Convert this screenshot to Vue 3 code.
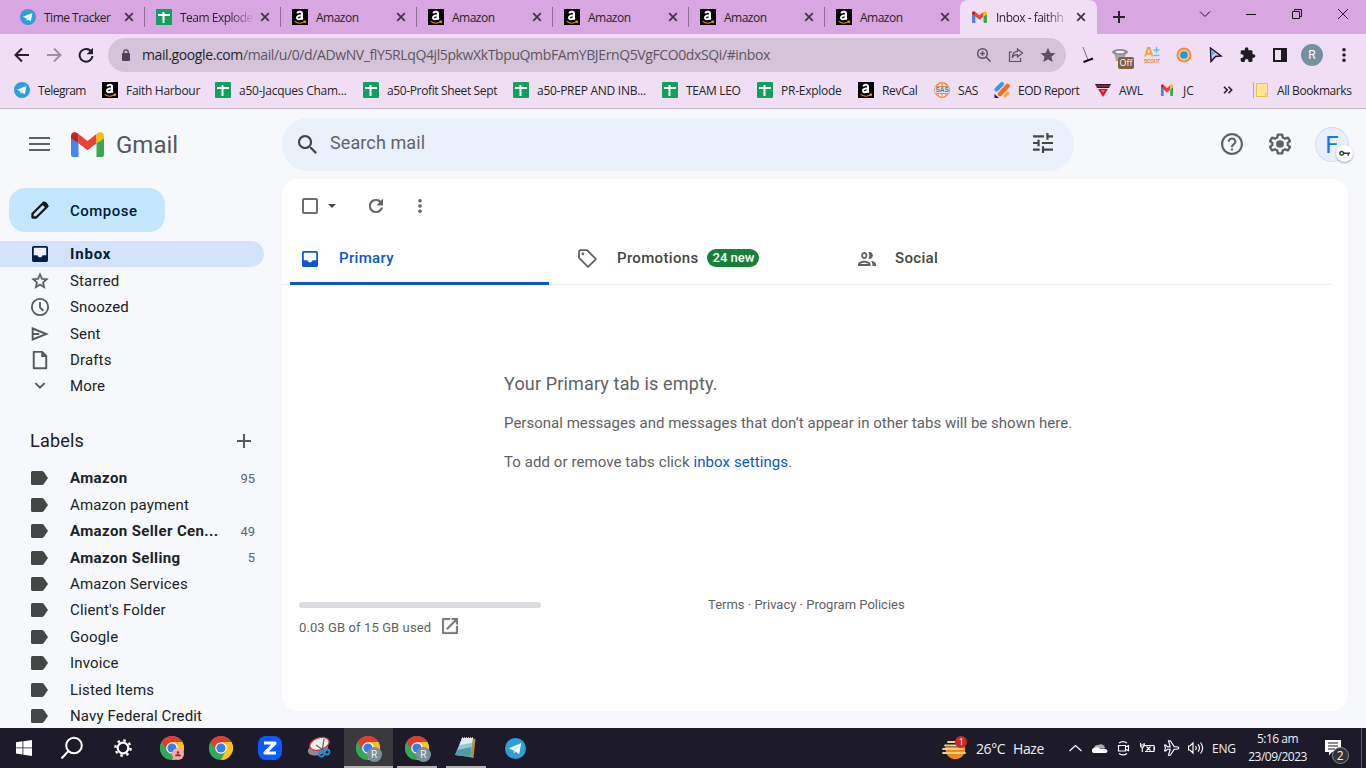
<template>
  <div class="screen">
    <svg class="sprite" aria-hidden="true">
      <symbol id="telegram" viewBox="0 0 16 16">
        <circle cx="8" cy="8" r="8" fill="#2ba0da" />
        <path d="M3 7.8l9.4-3.900-1.600 8.400-2.600-1.900-1.400 1.300-.2-2.200z" fill="#fff" />
        <path d="M6.600 9.400l4.200-3.700-3.200 4.300-.8 1.600z" fill="#b5d6ea" />
      </symbol>
      <symbol id="sheet" viewBox="0 0 16 16">
        <rect width="16" height="16" rx="1" fill="#12a05c" />
        <path d="M2 6h12M7.500 3v11" stroke="#fff" stroke-width="2" />
      </symbol>
      <symbol id="gmail" viewBox="0 0 33 25" preserveAspectRatio="none">
        <path d="M0 6l7.500 5v14H2.300A2.300 2.300 0 0 1 0 22.700z" fill="#4285f4" />
        <path d="M33 6l-7.500 5v14h5.200a2.300 2.300 0 0 0 2.300-2.300z" fill="#34a853" />
        <path d="M7.500 2l9 6.900 9-6.900v9.200l-9 7-9-7z" fill="#ea4335" />
        <path d="M0 4C0 .4 4-1.200 7.500 2v9.200L0 6.500z" fill="#c5221f" />
        <path d="M33 4c0-3.600-4-5.200-7.500-2v9.200L33 6.500z" fill="#fbbc04" />
      </symbol>
      <symbol id="eod" viewBox="0 0 16 16">
        <path d="M2.500 7.500L8 2" stroke="#2f9bf5" stroke-width="4" stroke-linecap="round" />
        <path d="M6 12l7.500-8" stroke="#ff6a13" stroke-width="4.500" stroke-linecap="round" />
        <path d="M11 14l3-3" stroke="#ffa838" stroke-width="3" stroke-linecap="round" />
        <path d="M.5 12v4h4.500z" fill="#152063" />
      </symbol>
      <symbol id="awl" viewBox="0 0 16 16">
        <path d="M0 2h16l-2 4H2z" fill="#3b1020" />
        <path d="M1 4h14" stroke="#c4485c" />
        <path d="M3 7h10l-5 8z" fill="#e5102b" />
        <path d="M6 8h4l-2 3z" fill="#fff" opacity=".35" />
      </symbol>
      <symbol id="folder" viewBox="0 0 16 16">
        <path d="M2.500 1.500h11v13h-11z" fill="#ffe596" stroke="#e8c44e" />
        <path d="M11.500 14.500v-3h2" fill="none" stroke="#e8c44e" />
      </symbol>
      <symbol id="close" viewBox="0 0 10 10">
        <path d="M1.200 1.200l7.600 7.600M8.800 1.200L1.200 8.800" stroke="#3c3240" stroke-width="1.700" />
      </symbol>
      <symbol id="inbox" viewBox="3 3 18 18">
        <path d="M5 5h14v9H5z" fill="#fff" opacity=".6" />
        <path d="M19 3H5c-1.100 0-2 .9-2 2v14c0 1.100.9 2 2 2h14c1.100 0 2-.9 2-2V5c0-1.100-.9-2-2-2zm0 10.500h-4.300c0 1.500-1.200 2.500-2.700 2.500s-2.700-1-2.700-2.500H5V5h14v8.500z" fill="currentColor" />
      </symbol>
      <symbol id="star" viewBox="0 0 24 24">
        <path d="M22 9.240l-7.190-.62L12 2 9.190 8.630 2 9.240l5.460 4.730L5.820 21 12 17.270 18.180 21l-1.630-7.030L22 9.240zM12 15.400l-3.760 2.270 1-4.280-3.320-2.880 4.380-.38L12 6.100l1.710 4.040 4.380.38-3.320 2.880 1 4.280L12 15.400z" fill="currentColor" stroke="currentColor" stroke-width=".5" />
      </symbol>
      <symbol id="clock" viewBox="0 0 24 24">
        <circle cx="12" cy="12" r="9.800" fill="none" stroke="currentColor" stroke-width="2.200" />
        <path d="M12 6v6.500l4 4" fill="none" stroke="currentColor" stroke-width="2.200" />
      </symbol>
      <symbol id="send" viewBox="0 0 24 24">
        <path d="M3.200 5.400L19.500 12 3.200 18.600zM3 12h8" fill="none" stroke="currentColor" stroke-width="2.300" />
      </symbol>
      <symbol id="draft" viewBox="0 0 24 24">
        <path d="M4.500 2.200h10l5 5v14.600h-15z" fill="none" stroke="currentColor" stroke-width="2.300" stroke-linejoin="round" />
        <path d="M13.500 2v6.500H20z" fill="currentColor" />
      </symbol>
      <symbol id="chevron" viewBox="0 0 24 24">
        <path d="M6.500 8.500l5.500 5.500 5.500-5.500" fill="none" stroke="currentColor" stroke-width="2.300" />
      </symbol>
      <symbol id="label" viewBox="0 0 17 14" preserveAspectRatio="none">
        <path d="M1.500 0H11q1 0 1.600.8L17 7l-4.400 6.200q-.6.8-1.600.8H1.500Q0 14 0 12.500v-11Q0 0 1.500 0z" fill="currentColor" />
      </symbol>
      <symbol id="search" viewBox="3 3 17.500 17.500" preserveAspectRatio="none">
        <path d="M15.500 14h-.79l-.28-.27C15.410 12.590 16 11.110 16 9.500 16 5.910 13.090 3 9.500 3S3 5.910 3 9.500 5.910 16 9.500 16c1.610 0 3.090-.59 4.230-1.570l.27.28v.79l5 4.990L20.490 19l-4.990-5zm-6 0C7.010 14 5 11.990 5 9.500S7.010 5 9.500 5 14 7.010 14 9.500 11.990 14 9.500 14z" fill="currentColor" />
      </symbol>
      <symbol id="tune" viewBox="3 3 18 18" preserveAspectRatio="none">
        <path d="M3 17v2h6v-2H3zM3 5v2h10V5H3zm10 16v-2h8v-2h-8v-2h-2v6h2zM7 9v2H3v2h4v2h2V9H7zm14 4v-2H11v2h10zm-6-4h2V7h4V5h-4V3h-2v6z" fill="currentColor" />
      </symbol>
      <symbol id="help" viewBox="2 2 20 20" preserveAspectRatio="none">
        <path d="M11 18h2v-2h-2v2zm1-16C6.480 2 2 6.480 2 12s4.480 10 10 10 10-4.480 10-10S17.520 2 12 2zm0 18c-4.410 0-8-3.590-8-8s3.590-8 8-8 8 3.590 8 8-3.590 8-8 8zm0-14c-2.210 0-4 1.790-4 4h2c0-1.100.9-2 2-2s2 .9 2 2c0 2-3 1.750-3 5h2c0-2.250 3-2.500 3-5 0-2.210-1.790-4-4-4z" fill="currentColor" />
      </symbol>
      <symbol id="gear" viewBox="2 1.500 20 21" preserveAspectRatio="none">
        <path d="M10 3h4l.5 2.800 2 1.100 2.700-1 1.900 3.400-2.100 1.700v2l2.100 1.700-1.900 3.400-2.700-1-2 1.100L14 21h-4l-.5-2.800-2-1.100-2.700 1-1.900-3.400L5 13v-2L2.900 9.300l1.900-3.400 2.700 1 2-1.100z" fill="none" stroke="currentColor" stroke-width="2.200" stroke-linejoin="round" />
        <circle cx="12" cy="12" r="3.600" fill="currentColor" />
      </symbol>
      <symbol id="refresh" viewBox="4 4 16 16">
        <path d="M17.650 6.350C16.200 4.900 14.210 4 12 4c-4.420 0-7.990 3.580-7.990 8s3.570 8 7.990 8c3.730 0 6.840-2.550 7.730-6h-2.080c-.82 2.330-3.040 4-5.650 4-3.310 0-6-2.690-6-6s2.690-6 6-6c1.660 0 3.140.69 4.220 1.780L13 11h7V4l-2.350 2.350z" fill="currentColor" stroke="currentColor" stroke-width=".5" />
      </symbol>
      <symbol id="dots" viewBox="0 0 4 14">
        <circle cx="2" cy="1.800" r="1.800" fill="currentColor" />
        <circle cx="2" cy="7" r="1.800" fill="currentColor" />
        <circle cx="2" cy="12.200" r="1.800" fill="currentColor" />
      </symbol>
      <symbol id="tag" viewBox="0 0 18 18">
        <path d="M1 2v6.500L9.500 17l7.500-7.500L8.500 1H2z" fill="none" stroke="currentColor" stroke-width="1.700" stroke-linejoin="round" />
        <circle cx="4.600" cy="4.600" r="1.300" fill="currentColor" />
      </symbol>
      <symbol id="people" viewBox="2 5 20 14" preserveAspectRatio="none">
        <path d="M9 13.750c-2.340 0-7 1.170-7 3.500V19h14v-1.750c0-2.330-4.660-3.500-7-3.500zM4.340 17c.84-.58 2.870-1.250 4.660-1.250s3.820.67 4.660 1.250H4.340zM9 12c1.930 0 3.500-1.570 3.500-3.500S10.930 5 9 5 5.500 6.570 5.500 8.500 7.070 12 9 12zm0-5c.83 0 1.500.67 1.500 1.500S9.830 10 9 10s-1.500-.67-1.500-1.500S8.170 7 9 7zm7.040 6.810c1.160.84 1.960 1.960 1.960 3.440V19h4v-1.750c0-2.020-3.500-3.170-5.960-3.440zM15 12c1.930 0 3.500-1.570 3.500-3.500S16.930 5 15 5c-.54 0-1.040.13-1.500.35.63.89 1 1.980 1 3.150s-.37 2.260-1 3.150c.46.22.96.35 1.500.35z" fill="currentColor" />
      </symbol>
      <symbol id="launch" viewBox="3 3 18 18">
        <path d="M19 19H5V5h7V3H5c-1.110 0-2 .9-2 2v14c0 1.100.89 2 2 2h14c1.100 0 2-.9 2-2v-7h-2v7zM14 3v2h3.590l-9.830 9.830 1.410 1.410L19 6.410V10h2V3h-7z" fill="currentColor" stroke="currentColor" stroke-width=".5" />
      </symbol>
      <symbol id="puzzle" viewBox="1 1 23 22">
        <path d="M20.500 11H19V7c0-1.100-.9-2-2-2h-4V3.500C13 2.120 11.880 1 10.500 1S8 2.120 8 3.500V5H4c-1.100 0-1.990.9-1.990 2v3.800H3.500c1.490 0 2.700 1.210 2.700 2.700s-1.210 2.700-2.700 2.700H2V20c0 1.100.9 2 2 2h3.800v-1.500c0-1.490 1.210-2.700 2.700-2.700 1.490 0 2.700 1.210 2.700 2.700V22H17c1.100 0 2-.9 2-2v-4h1.500c1.380 0 2.500-1.120 2.500-2.500S21.880 11 20.500 11z" fill="#1f1b22" />
      </symbol>
      <symbol id="chrome" viewBox="0 0 24 24">
        <circle cx="12" cy="12" r="12" fill="#34a853" />
        <path d="M1.600 6A12 12 0 0 1 22.400 6L12 8z" fill="#e33b2e" />
        <path d="M22.400 6A12 12 0 0 1 12 24l4.800-9.500L12 6z" fill="#fcc31e" />
        <path d="M1.600 6L7.500 15 12 6z" fill="#e33b2e" />
        <path d="M1.600 6L7.200 14.800 11 17l-3 6.300A12 12 0 0 1 1.600 6z" fill="#34a853" />
        <circle cx="12" cy="12" r="5.800" fill="#fff" />
        <circle cx="12" cy="12" r="4.600" fill="#3b7ded" />
      </symbol>
      <symbol id="amazon" viewBox="0 0 16 16">
        <rect width="16" height="16" fill="#000" />
        <path d="M5.200 4.300C6 2.300 10 2.200 10 4.600v4.200q0 1 .9 1.700M10 6.200C6.500 6.200 5 7 5 8.800s3.700 2.400 5-.8" fill="none" stroke="#fff" stroke-width="2" />
        <path d="M2.500 12.400c3.400 2.300 7.200 2.200 10.600.4M11.300 12.300l2.300-.1-.6 2" stroke="#f19a2e" fill="none" stroke-width="1.100" />
      </symbol>
      <symbol id="sas" viewBox="0 0 16 16">
        <circle cx="8" cy="8" r="7.300" fill="#fff3e6" stroke="#f08a3c" stroke-width="1.200" />
        <path d="M8 1v14M2 4.500h12M2 11.500h12M5 1.500c-2 4-2 9 0 13M11 1.500c2 4 2 9 0 13" stroke="#f08a3c" fill="none" />
        <rect x="1" y="5" width="14" height="6" fill="#f0dff4" />
      </symbol>
    </svg>

    <header class="browser">
      <div class="tabstrip">
        <div v-for="(tab, i) in tabs" :key="i" :class="['tab', { active: tab.active }]">
          <svg class="fav"><use :href="'#' + tab.icon" /></svg>
          <span :class="['tab-title', { fade: tab.fade }]">{{ tab.title }}</span>
          <svg class="tab-close"><use href="#close" /></svg>
        </div>
        <svg class="new-tab" viewBox="0 0 12 12"><path d="M6 0v12M0 6h12" stroke="#2a222e" stroke-width="2" /></svg>
        <div class="win-buttons">
          <svg viewBox="0 0 12 12"><path d="M1 3.500l5 5 5-5" /></svg>
          <svg viewBox="0 0 12 12"><path d="M1 6.500h10" /></svg>
          <svg viewBox="0 0 12 12"><path d="M1.500 3.500h7v7h-7zM3.500 3.500v-2h7v7h-2" /></svg>
          <svg viewBox="0 0 12 12"><path d="M1 1l10 10M11 1L1 11" /></svg>
        </div>
      </div>

      <div class="toolbar">
        <svg class="nav" viewBox="0 0 16 16"><path d="M15 8H2M8 1.500L1.500 8 8 14.500" /></svg>
        <svg class="nav off" viewBox="0 0 16 16"><path d="M1 8h13M8 1.500L14.500 8 8 14.500" /></svg>
        <svg class="nav" viewBox="0 0 16 16"><path d="M13.500 5A6.400 6.400 0 1 0 14.400 9" /><path class="solid" d="M15 .8v6.400H8.600z" /></svg>
        <div class="omnibox">
          <svg class="lock" viewBox="0 0 10 12"><rect x="1" y="4" width="8" height="8" rx="1" fill="#4c4450" /><path d="M2.800 5V3a2.200 2.200 0 0 1 4.400 0v2" fill="none" stroke="#4c4450" stroke-width="1.300" /></svg>
          <span class="url"><b>mail.google.com</b>/mail/u/0/d/ADwNV_flY5RLqQ4jl5pkwXkTbpuQmbFAmYBJErnQ5VgFCO0dxSQi/#inbox</span>
          <svg class="omni-icon" viewBox="0 0 16 16"><circle cx="6.500" cy="6.500" r="4.800" /><path d="M10 10l4.500 4.500M4.300 6.500h4.400M6.500 4.300v4.400" /></svg>
          <svg class="omni-icon" viewBox="0 0 16 16"><path d="M4 5H1.500v9.500h11V11M9.500 2l5 4-5 4V7.600C7 7.600 5 8.500 4.200 11 4.300 7 6 4.700 9.500 4.400z" stroke-width="1.200" /></svg>
          <svg class="omni-icon" viewBox="0 0 16 16"><path class="fill" d="M8 .8l2.100 5 5.400.4-4.100 3.500 1.300 5.300L8 12.200 3.300 15l1.300-5.300L.5 6.200l5.400-.4z" /></svg>
        </div>
        <div class="extensions">
          <svg viewBox="0 0 16 16"><path d="M3 0l5 13" stroke="#716a76" stroke-width="1" /><path d="M3.500 15L13 11.500" stroke="#111" stroke-width="2" /></svg>
          <span class="ext-badged">
            <svg viewBox="0 0 16 16"><path d="M2 6h12l-2 8H4z" fill="#a8a8a8" /><ellipse cx="8" cy="5" rx="8" ry="3" fill="#8d8d8d" /><ellipse cx="8" cy="5" rx="4.500" ry="1.300" fill="#eee" /></svg>
            <i>Off</i>
          </span>
          <svg viewBox="0 0 16 16">
            <path d="M1 9.500L4 1h1.500l3 8.500M2.500 6.800h5" stroke="#f7a63b" stroke-width="2" fill="none" />
            <path d="M12.500 0v6M9.500 3h6M9.500 8.500h6" stroke="#5cc1e8" stroke-width="1.400" />
            <text x="0" y="15.500" font-family="Liberation Sans, sans-serif" font-size="5" font-weight="700" fill="#f58220" textLength="16">SCOUT</text>
          </svg>
          <svg viewBox="0 0 16 16"><circle cx="8" cy="8" r="7.500" fill="#f5893a" /><circle cx="8" cy="8" r="5.600" fill="#ffc48c" /><circle cx="8" cy="8" r="3.800" fill="#1e9be0" /></svg>
          <svg viewBox="0 0 16 16"><path d="M2.500 1l10.500 8-5.500.5L3 14.500z" fill="#d8c8f2" stroke="#191535" stroke-width="1.500" /><path d="M3.300 3v6l4-2.800z" fill="#53b6ea" /></svg>
          <svg><use href="#puzzle" /></svg>
          <svg viewBox="0 0 16 16"><path d="M2 2h12v12H2z" fill="none" stroke="#1f1b22" stroke-width="2" /><path d="M9 2h5v12H9z" fill="#1f1b22" /></svg>
        </div>
        <span class="profile">R</span>
        <svg class="menu-dots"><use href="#dots" /></svg>
      </div>

      <div class="bookmarks">
        <div v-for="mark in bookmarks" :key="mark.title" class="bookmark" :style="{ width: mark.width + 'px' }">
          <svg :class="['fav', mark.icon]" viewBox="0 0 16 16">
            <use :href="'#' + mark.icon" width="16" height="16" />
            <text v-if="mark.icon === 'sas'" x="1.500" y="10.300" font-family="Liberation Sans, sans-serif" font-weight="700" font-size="6.500" fill="#1c86c8">SAS</text>
          </svg>
          <span :style="{ letterSpacing: mark.spacing + 'px' }">{{ mark.title }}</span>
        </div>
        <svg class="overflow" viewBox="0 0 10 8"><path d="M1 .8L4.200 4 1 7.200M5.500.8L8.700 4 5.500 7.200" fill="none" stroke="#241f28" stroke-width="1.600" /></svg>
        <div class="all-marks">
          <svg class="fav"><use href="#folder" /></svg>
          <span>All Bookmarks</span>
        </div>
      </div>
    </header>

    <div class="mail">
      <aside class="side">
        <div class="brand">
          <svg class="burger" viewBox="0 0 21 14"><path d="M0 1h21M0 7h21M0 13h21" stroke="#5f6368" stroke-width="2" /></svg>
          <svg class="logo"><use href="#gmail" /></svg>
          <span>Gmail</span>
        </div>
        <button class="compose">
          <svg viewBox="0 0 18 18"><path d="M1.500 16.500v-3.700L12.800 1.500l3.700 3.700L5.200 16.500z" fill="none" stroke="#15191c" stroke-width="2.300" stroke-linejoin="round" /><path d="M11 3.500l2.300-2.300a1.200 1.200 0 0 1 1.600 0l2 2a1.200 1.200 0 0 1 0 1.600L14.500 7z" fill="#15191c" /></svg>
          <span>Compose</span>
        </button>
        <nav class="folders">
          <div v-for="(folder, i) in folders" :key="folder.name" :class="['row', { selected: i === 0 }]">
            <svg :class="['row-icon', folder.icon]"><use :href="'#' + folder.icon" /></svg>
            <span class="row-name">{{ folder.name }}</span>
          </div>
        </nav>
        <div class="labels-head">
          <span>Labels</span>
          <svg viewBox="0 0 14 14"><path d="M7 0v14M0 7h14" stroke="#55585c" stroke-width="2" /></svg>
        </div>
        <nav class="labels">
          <div v-for="label in labels" :key="label.name" :class="['row', { unread: label.count }]">
            <svg class="row-icon label"><use href="#label" /></svg>
            <span class="row-name">{{ label.name }}</span>
            <span v-if="label.count" class="count">{{ label.count }}</span>
          </div>
        </nav>
      </aside>

      <main class="content">
        <div class="topbar">
          <div class="search">
            <svg class="search-icon"><use href="#search" /></svg>
            <span>Search mail</span>
            <svg class="tune-icon"><use href="#tune" /></svg>
          </div>
          <svg class="top-icon"><use href="#help" /></svg>
          <svg class="top-icon gear"><use href="#gear" /></svg>
          <div class="avatar">
            <span>F</span>
            <i><svg viewBox="0 0 10 6"><circle cx="2.500" cy="3" r="1.700" fill="none" stroke="#333" stroke-width="1.300" /><path d="M4.200 3H10M8.300 3v2.200" stroke="#333" stroke-width="1.300" /></svg></i>
          </div>
        </div>

        <section class="card">
          <div class="actions">
            <span class="checkbox"></span>
            <span class="caret"></span>
            <svg class="reload"><use href="#refresh" /></svg>
            <svg class="more"><use href="#dots" /></svg>
          </div>
          <div class="categories">
            <div class="category current"><svg class="cat-inbox"><use href="#inbox" /></svg><span>Primary</span></div>
            <div class="category"><svg class="cat-tag"><use href="#tag" /></svg><span>Promotions</span><em>24 new</em></div>
            <div class="category"><svg class="cat-people"><use href="#people" /></svg><span>Social</span></div>
          </div>
          <div class="empty">
            <h2>Your Primary tab is empty.</h2>
            <p>Personal messages and messages that don’t appear in other tabs will be shown here.</p>
            <p>To add or remove tabs click <a>inbox settings</a>.</p>
          </div>
          <footer class="foot">
            <div class="storage">
              <div class="meter"></div>
              <div class="used"><span>0.03 GB of 15 GB used</span><svg><use href="#launch" /></svg></div>
            </div>
            <div class="policies">Terms · Privacy · Program Policies</div>
          </footer>
        </section>
      </main>
    </div>

    <footer class="taskbar">
      <div class="task"><svg class="w15" viewBox="0 0 16 16"><path d="M0 2.200l6.500-.9v6.200H0zM7.300 1.200L16 0v7.500H7.300zM0 8.300h6.500v6.200L0 13.600zM7.300 8.300H16V16l-8.700-1.200z" fill="#fff" /></svg></div>
      <div class="task"><svg viewBox="0 0 24 24"><circle cx="14" cy="9.500" r="7.800" fill="none" stroke="#fff" stroke-width="2" /><path d="M8.500 15L1.500 22.500" stroke="#fff" stroke-width="2" /></svg></div>
      <div class="task"><svg class="w18" viewBox="0 0 18 18"><circle cx="9" cy="9" r="5.300" fill="none" stroke="#fff" stroke-width="2.200" /><circle cx="9" cy="9" r="7.600" fill="none" stroke="#fff" stroke-width="2.400" stroke-dasharray="2.600 3.370" /></svg></div>
      <div class="task"><svg><use href="#chrome" /></svg><i class="person"><svg viewBox="0 0 8 8"><circle cx="4" cy="2" r="1.700" fill="#a52a24" /><path d="M0 7q0-3 4-3t4 3z" fill="#a52a24" /></svg></i></div>
      <div class="task"><svg><use href="#chrome" /></svg></div>
      <div class="task"><svg viewBox="0 0 24 24"><rect width="24" height="24" rx="8" fill="#0b5cff" /><path d="M6 7h11L7 17h11" fill="none" stroke="#fff" stroke-width="3.200" stroke-linejoin="round" /></svg></div>
      <div class="task"><svg viewBox="0 0 24 24"><ellipse cx="11" cy="13" rx="10.500" ry="6" fill="#8c8a90" transform="rotate(-18 11 13)" /><ellipse cx="12.500" cy="8" rx="10" ry="6" fill="#f3f0f0" stroke="#d3313b" stroke-width="1.300" transform="rotate(-18 12 8)" /><path d="M9 9l10 7M17 3l-2 13" stroke="#5d6168" stroke-width="1.300" /><circle cx="14.500" cy="18" r="2.500" fill="none" stroke="#1c8fd6" stroke-width="1.800" /><circle cx="20" cy="16" r="2.500" fill="none" stroke="#1c8fd6" stroke-width="1.800" /></svg></div>
      <div class="task current"><svg><use href="#chrome" /></svg><i>R</i></div>
      <div class="task open"><svg><use href="#chrome" /></svg><i>R</i></div>
      <div class="task open"><svg viewBox="0 0 24 24"><path d="M17 2l4.500 1-2 19-5-1z" fill="#b88a43" /><path d="M8 2h11l-2.500 19L1 19z" fill="#91c9cf" /><path d="M8 2h11l-1 5-12.500 2z" fill="#d6eff0" /><path d="M3.500 14L17.500 11l-1 10L1 19z" fill="#4f9aa6" /><path d="M8 2h11" stroke="#e8e8e8" stroke-width="1.500" stroke-dasharray="1 1" /></svg></div>
      <div class="task"><svg class="w20"><use href="#telegram" /></svg></div>

      <div class="weather">
        <svg viewBox="0 0 26 26">
          <path d="M3 12h20a10 10 0 0 1-19 6z" fill="#f08a1d" />
          <path d="M6 7h7M3 10.500h12M1 14h20M1 18h22" stroke="#f8cf7b" stroke-width="1.800" stroke-linecap="round" />
          <circle cx="19" cy="7" r="6" fill="#c92a21" />
          <text x="19" y="10.200" text-anchor="middle" font-family="Open Sans, sans-serif" font-size="9" fill="#fff">1</text>
        </svg>
        <span>26°C</span><span>Haze</span>
      </div>
      <div class="tray">
        <svg viewBox="0 0 16 16"><path d="M1.500 11L7.500 5.500l6 5.500" /></svg>
        <svg viewBox="0 0 16 16"><path d="M2 9a3.500 3.500 0 0 1 4-4 4.500 4.500 0 0 1 7 3z" fill="#aaa9b0" stroke="none" /><path d="M1.500 13a2.600 2.600 0 0 1 .5-5c2-1.200 5-.8 6.500 1C12 7.600 15 9 15.500 11a2 2 0 0 1-2 2z" fill="#fff" stroke="none" /></svg>
        <svg viewBox="0 0 16 16"><path d="M2.500 5.500h7v5.500h-7zM9.500 7l3-1.300v5l-3-1.300M3 3Q7 .2 11 3M3 13.500q4 2.800 8 0" /></svg>
        <svg viewBox="0 0 16 16"><path d="M5.500 5.500H15v6H6M15.500 7v3M1.500 3v2.500a1.800 1.800 0 0 0 3.600 0V3M3.300 7.500V12M7.500 6.500l4 4M11.500 6.500l-4 4M.5 5h5.500" transform="translate(-1 0)" /></svg>
        <svg viewBox="0 0 16 16"><path d="M14.800 8c0-1-1.500-1.300-4.500-1.200L6.300.8H4.500l1.700 6H3.500L1.800 5H.5l1 3-1 3h1.300L3.500 9.200h2.700l-1.700 6h1.800l4-6c3 .1 4.500-.2 4.500-1.200z" /></svg>
        <svg viewBox="0 0 16 16"><path d="M.5 6h1.500L5 3v10l-3-3H.5zM7.500 6q1.500 2 0 4M10 4.300q3 3.700 0 7.400M12.500 2.500q4.300 5.500 0 11" /></svg>
        <span>ENG</span>
      </div>
      <div class="datetime"><span>5:16 am</span><span>23/09/2023</span></div>
      <div class="notify">
        <svg viewBox="0 0 16 16"><path d="M0 0h16v12H7l-3 3.500V12H0z" fill="#fff" /><path d="M3 3h10M3 6h10M3 9h7" stroke="#1d1b29" stroke-width="1.200" /></svg>
        <i>2</i>
      </div>
      <span class="peek"></span>
    </footer>
  </div>
</template>

<script setup>
import { ref } from "vue";

const tabs = ref([
  { title: "Time Tracker", icon: "telegram" },
  { title: "Team Explode", icon: "sheet", fade: true },
  { title: "Amazon", icon: "amazon" },
  { title: "Amazon", icon: "amazon" },
  { title: "Amazon", icon: "amazon" },
  { title: "Amazon", icon: "amazon" },
  { title: "Amazon", icon: "amazon" },
  { title: "Inbox - faithh", icon: "gmail", fade: true, active: true },
]);

const bookmarks = ref([
  { title: "Telegram", icon: "telegram", width: 88, spacing: -0.55 },
  { title: "Faith Harbour", icon: "amazon", width: 113, spacing: -0.3 },
  { title: "a50-Jacques Cham...", icon: "sheet", width: 148, spacing: -0.25 },
  { title: "a50-Profit Sheet Sept", icon: "sheet", width: 150, spacing: -0.37 },
  { title: "a50-PREP AND INB...", icon: "sheet", width: 149, spacing: -0.27 },
  { title: "TEAM LEO", icon: "sheet", width: 95, spacing: -0.3 },
  { title: "PR-Explode", icon: "sheet", width: 101, spacing: -0.25 },
  { title: "RevCal", icon: "amazon", width: 76, spacing: -0.3 },
  { title: "SAS", icon: "sas", width: 60, spacing: -0.2 },
  { title: "EOD Report", icon: "eod", width: 101, spacing: -0.45 },
  { title: "AWL", icon: "awl", width: 64, spacing: -0.5 },
  { title: "JC", icon: "gmail", width: 60, spacing: 0 },
]);

const folders = ref([
  { name: "Inbox", icon: "inbox" },
  { name: "Starred", icon: "star" },
  { name: "Snoozed", icon: "clock" },
  { name: "Sent", icon: "send" },
  { name: "Drafts", icon: "draft" },
  { name: "More", icon: "chevron" },
]);

const labels = ref([
  { name: "Amazon", count: 95 },
  { name: "Amazon payment" },
  { name: "Amazon Seller Cen...", count: 49 },
  { name: "Amazon Selling", count: 5 },
  { name: "Amazon Services" },
  { name: "Client's Folder" },
  { name: "Google" },
  { name: "Invoice" },
  { name: "Listed Items" },
  { name: "Navy Federal Credit" },
]);
</script>

<style>
body {
  margin: 0;
  overflow: hidden;
}
</style>

<style scoped>
.screen {
  width: 1366px;
  height: 768px;
  display: flex;
  flex-direction: column;
  overflow: hidden;
  font-family: Roboto, "Liberation Sans", sans-serif;
  background: #f6f8fc;
}

.screen * {
  box-sizing: border-box;
}

svg {
  display: block;
  flex: none;
}

i,
em {
  font-style: normal;
}

.sprite {
  display: none;
}

/* browser chrome */
.browser {
  height: 109px;
  flex: none;
  background: #f0dff4;
  border-bottom: 1px solid #c4b3c9;
  font-family: "Open Sans", sans-serif;
  font-size: 12px;
  color: #241f28;
}

.fav {
  width: 16px;
  height: 16px;
}

.tabstrip {
  height: 34px;
  display: flex;
  background: #d8a7e1;
  padding-left: 8px;
}

.tab {
  width: 136px;
  height: 34px;
  display: flex;
  align-items: center;
  padding: 0 10px 0 12px;
  position: relative;
}

.tab:not(:nth-last-of-type(-n+3))::after {
  content: "";
  position: absolute;
  right: -1px;
  top: 7px;
  width: 1px;
  height: 20px;
  background: #8e6b96;
}

.tab.active {
  width: 137px;
  background: #f0dff4;
  border-radius: 8px 8px 0 0;
  padding-right: 11px;
}

.tab.active .fav {
  height: 12px;
  width: 15px;
  margin-right: 1px;
}

.tab-title {
  margin-left: 8px;
  width: 73px;
  white-space: nowrap;
  letter-spacing: -0.5px;
}

.tab-title.fade {
  mask-image: linear-gradient(to right, #000 68%, transparent 102%);
}

.tab-close {
  width: 10px;
  height: 10px;
  margin-left: auto;
}

.new-tab {
  width: 12px;
  height: 12px;
  margin: 11px 0 0 16px;
}

.win-buttons {
  display: flex;
  gap: 34px;
  margin: 8px 0 0 74px;
}

.win-buttons svg {
  width: 12px;
  height: 12px;
  fill: none;
  stroke: #17131a;
}

.toolbar {
  height: 41px;
  display: flex;
  align-items: center;
  padding-left: 14px;
}

.nav {
  width: 16px;
  height: 16px;
  margin-right: 16px;
  fill: none;
  stroke: #241f28;
  stroke-width: 2;
}

.nav.off {
  stroke: #9c8fa1;
}

.nav .solid {
  fill: #241f28;
  stroke: none;
}

.omnibox {
  width: 958px;
  height: 34px;
  margin-left: -2px;
  border-radius: 17px;
  background: #d3c4d7;
  display: flex;
  align-items: center;
  padding-left: 13px;
  color: #5d5562;
}

.lock {
  width: 10px;
  height: 12px;
}

.url {
  margin-left: 11px;
  width: 834px;
  flex: none;
  font-size: 14px;
  white-space: nowrap;
  letter-spacing: -0.385px;
}

.url b {
  font-weight: 400;
  color: #241f28;
}

.omni-icon {
  width: 16px;
  height: 16px;
  margin-right: 16px;
  fill: none;
  stroke: #5a5260;
  stroke-width: 1.5;
}

.omni-icon .fill {
  fill: #5a5260;
  stroke: none;
}

.extensions {
  display: flex;
  gap: 16px;
  margin-left: 14px;
}

.extensions svg {
  width: 16px;
  height: 16px;
}

.ext-badged {
  position: relative;
}

.ext-badged i {
  position: absolute;
  left: 6px;
  top: 10px;
  width: 16px;
  height: 12px;
  border-radius: 2px;
  background: #80603f;
  color: #fff;
  font-size: 9px;
  line-height: 12px;
  text-align: center;
}

.profile {
  width: 22px;
  height: 22px;
  margin-left: 13px;
  border-radius: 50%;
  background: #78909c;
  color: #fff;
  font: 12px/22px Roboto, sans-serif;
  text-align: center;
}

.menu-dots {
  width: 4px;
  height: 14px;
  margin-left: 19px;
}

.bookmarks {
  height: 30px;
  display: flex;
  align-items: center;
  padding-left: 14px;
  white-space: nowrap;
}

.bookmark {
  display: flex;
  align-items: center;
  gap: 8px;
  flex: none;
}

.bookmark .gmail {
  height: 12px;
}

.overflow {
  width: 10px;
  height: 8px;
  margin-left: 4px;
}

.all-marks {
  display: flex;
  align-items: center;
  gap: 7px;
  height: 16px;
  margin-left: 20px;
  padding-right: 10px;
  border-left: 1px solid #b8a5bd;
  letter-spacing: -0.42px;
}

/* mail page */
.mail {
  height: 619px;
  flex: none;
  display: flex;
  overflow: hidden;
}

.side {
  width: 282px;
  flex: none;
  color: #202124;
}

.brand {
  height: 70px;
  display: flex;
  align-items: center;
  padding-left: 29px;
}

.burger {
  width: 21px;
  height: 14px;
}

.logo {
  width: 33px;
  height: 25px;
  margin: 0 12px 0 21px;
}

.brand span {
  padding-top: 1px;
  font-size: 24px;
  color: #55585c;
}

.compose {
  width: 156px;
  height: 44px;
  margin: 9px 0 9px 9px;
  padding: 0 0 0 22px;
  display: flex;
  align-items: center;
  gap: 21px;
  border: none;
  border-radius: 16px;
  background: #c2e7ff;
  color: #001d35;
  font: 500 15px Roboto, sans-serif;
  letter-spacing: 0.5px;
}

.compose span {
  padding-top: 2px;
}

.compose svg {
  width: 18px;
  height: 18px;
}

.row {
  height: 26.45px;
  width: 264px;
  display: flex;
  align-items: center;
  padding: 0 9px 0 31px;
  font-size: 15px;
  letter-spacing: 0.15px;
}

.row-icon {
  width: 20px;
  height: 20px;
  margin: 0 20px 0 -1px;
  color: #55585c;
}

.row-icon.inbox {
  width: 16px;
  height: 16px;
  margin: 0 22px 0 1px;
}

.row-icon.label {
  width: 17px;
  height: 14px;
  margin: 0 22px 0 0;
  color: #444746;
}

.row.selected {
  border-radius: 0 13px 13px 0;
  background: #d3e3fd;
  color: #001d35;
  font-weight: 700;
  letter-spacing: 0.8px;
}

.row.selected .row-icon {
  color: #041e49;
}

.row.unread .row-name {
  font-weight: 700;
  letter-spacing: 0.38px;
}

.count {
  margin-left: auto;
  font-size: 13px;
  color: #5f6368;
  letter-spacing: 0;
}

.labels-head {
  width: 251px;
  height: 66px;
  margin: 8px 0 -9px;
  padding-left: 30px;
  display: flex;
  align-items: center;
  justify-content: space-between;
  font-size: 18px;
  letter-spacing: 0.2px;
}

.labels-head svg {
  width: 14px;
  height: 14px;
}

.labels {
  padding-top: 0.4px;
}

.content {
  flex: 1;
}

.topbar {
  height: 70px;
  display: flex;
  align-items: center;
}

.search {
  width: 792px;
  height: 53px;
  border-radius: 26px;
  background: #eaf1fb;
  display: flex;
  align-items: center;
  padding: 0 21px 0 16px;
  font-size: 18px;
  letter-spacing: 0.1px;
  color: #5f6368;
}

.search span {
  padding-bottom: 4px;
}

.search-icon {
  width: 19px;
  height: 19px;
  margin-right: 13px;
  color: #444746;
}

.tune-icon {
  width: 20px;
  height: 20px;
  margin: -2px 0 0 auto;
  color: #444746;
}

.top-icon {
  width: 22px;
  height: 22px;
  margin-left: 147px;
  color: #5f6368;
}

.top-icon.gear {
  margin-left: 26px;
}

.avatar {
  position: relative;
  width: 34px;
  height: 35px;
  margin-left: 24px;
  border: 1px solid #d3dcec;
  border-radius: 50%;
  background: #e8f0fe;
  color: #1a73e8;
  font-size: 24px;
  line-height: 35px;
  text-align: center;
}

.avatar i {
  position: absolute;
  left: 20px;
  top: 17px;
  width: 17px;
  height: 17px;
  padding: 5px 3px;
  border-radius: 50%;
  background: #fff;
  box-shadow: 0 1px 2px rgba(0, 0, 0, 0.35);
}

.card {
  width: 1066px;
  height: 532px;
  border-radius: 16px;
  background: #fff;
}

.actions {
  height: 53px;
  display: flex;
  align-items: center;
  padding-left: 20px;
  color: #5f6368;
}

.checkbox {
  width: 16px;
  height: 16px;
  border: 2px solid #6b6e70;
  border-radius: 2px;
}

.caret {
  margin: 1px 0 0 10px;
  border: 4px solid transparent;
  border-top: 4px solid #444746;
  border-bottom: 0;
}

.reload {
  width: 14px;
  height: 14px;
  margin-left: 33px;
}

.more {
  width: 4px;
  height: 14px;
  margin-left: 35px;
}

.categories {
  width: 1049px;
  height: 53px;
  padding-left: 8px;
  display: flex;
  border-bottom: 1px solid #e8edf3;
}

.category {
  width: 278px;
  height: 53px;
  display: flex;
  align-items: center;
  font-size: 15px;
  font-weight: 500;
  letter-spacing: 0.33px;
  color: #444746;
  padding-left: 10px;
}

.category span {
  padding-bottom: 2px;
}

.category.current {
  width: 259px;
  margin-right: 19px;
  padding: 3px 0 0 12px;
  color: #0b57d0;
  border-bottom: 3px solid #0b57d0;
  border-radius: 2px 2px 0 0;
}

.cat-inbox {
  width: 16px;
  height: 16px;
  margin-right: 21px;
}

.cat-tag {
  width: 19px;
  height: 19px;
  margin-right: 20px;
  color: #5f6368;
}

.cat-people {
  width: 18px;
  height: 14px;
  margin: 0 19px 0 2px;
  color: #5f6368;
}

.category em {
  width: 52px;
  height: 18px;
  margin: -2px 0 0 9px;
  border-radius: 9px;
  background: #188038;
  color: #fff;
  font-size: 13px;
  line-height: 18px;
  letter-spacing: 0;
  text-align: center;
}

.empty {
  height: 310px;
  padding: 87px 0 0 222px;
  color: #5f6164;
  font-size: 15px;
  white-space: nowrap;
}

.empty h2 {
  margin: 0 0 15px;
  font-size: 18px;
  line-height: 24px;
  font-weight: 400;
  letter-spacing: 0.15px;
}

.empty p {
  margin: 0 0 15px;
  line-height: 24px;
  letter-spacing: 0.02px;
}

.empty p + p {
  letter-spacing: 0.08px;
}

.empty a {
  color: #0b57d0;
}

.foot {
  display: flex;
  padding-left: 17px;
  font-size: 13px;
  color: #5f6164;
}

.storage {
  width: 409px;
  padding-top: 7px;
}

.meter {
  width: 242px;
  height: 6px;
  border-radius: 3px;
  background: #dadce0;
}

.used {
  display: flex;
  align-items: center;
  gap: 11px;
  margin-top: 12px;
  letter-spacing: 0.1px;
}

.used svg {
  width: 16px;
  height: 16px;
  margin-top: -3px;
  color: #72757a;
}

.policies {
  padding-top: 2px;
}

/* windows taskbar */
.taskbar {
  height: 40px;
  flex: none;
  display: flex;
  align-items: center;
  background: #1d1b29;
  color: #f1f0f4;
  font-family: "Open Sans", sans-serif;
  font-size: 12px;
}

.task {
  width: 49.1px;
  height: 40px;
  display: flex;
  align-items: center;
  justify-content: center;
  position: relative;
}

.task > svg {
  width: 24px;
  height: 24px;
}

.task > .w15 {
  width: 16px;
  height: 16px;
  margin-right: 2px;
}

.task:nth-child(2) {
  padding-right: 3px;
}

.task > .w18 {
  width: 18px;
  height: 18px;
}

.task > .w20 {
  width: 21px;
  height: 21px;
}

.task > i {
  position: absolute;
  left: 23px;
  top: 19px;
  width: 15px;
  height: 15px;
  border-radius: 50%;
  background: #78909c;
  font: 10px/15px Roboto, sans-serif;
  text-align: center;
}

.task > .person {
  width: 12px;
  height: 12px;
  left: 25px;
  top: 20px;
  padding: 3px;
  background: #f4aaa5;
}

.person svg {
  width: 6px;
  height: 6px;
}

.task.current {
  background: #3a393e;
  box-shadow: inset 0 -2px #b7b0b0;
}

.task.open::after {
  content: "";
  position: absolute;
  left: 4px;
  bottom: 0;
  width: 40px;
  height: 2px;
  background: #b7b0b0;
}

.weather {
  display: flex;
  align-items: center;
  gap: 8px;
  margin-left: 402px;
  width: 126px;
  font-size: 14px;
  letter-spacing: -0.45px;
  white-space: nowrap;
}

.weather svg {
  width: 26px;
  height: 26px;
}

.tray {
  display: flex;
  align-items: center;
  gap: 8px;
  letter-spacing: -0.3px;
}

.tray svg {
  width: 16px;
  height: 16px;
  fill: none;
  stroke: #fff;
  stroke-width: 1.15;
}

.datetime {
  width: 60px;
  margin-left: 12px;
  display: flex;
  flex-direction: column;
  align-items: center;
  line-height: 18px;
  letter-spacing: -0.5px;
}

.notify {
  position: relative;
  margin-left: 17px;
}

.notify svg {
  width: 16px;
  height: 16px;
}

.notify i {
  position: absolute;
  left: 7px;
  top: 7px;
  width: 17px;
  height: 17px;
  border-radius: 50%;
  border: 1px solid #8b8a90;
  background: #333238;
  line-height: 15px;
  text-align: center;
}

.peek {
  width: 1px;
  height: 40px;
  margin: 0 4px 0 auto;
  background: #5c5b66;
}
</style>
